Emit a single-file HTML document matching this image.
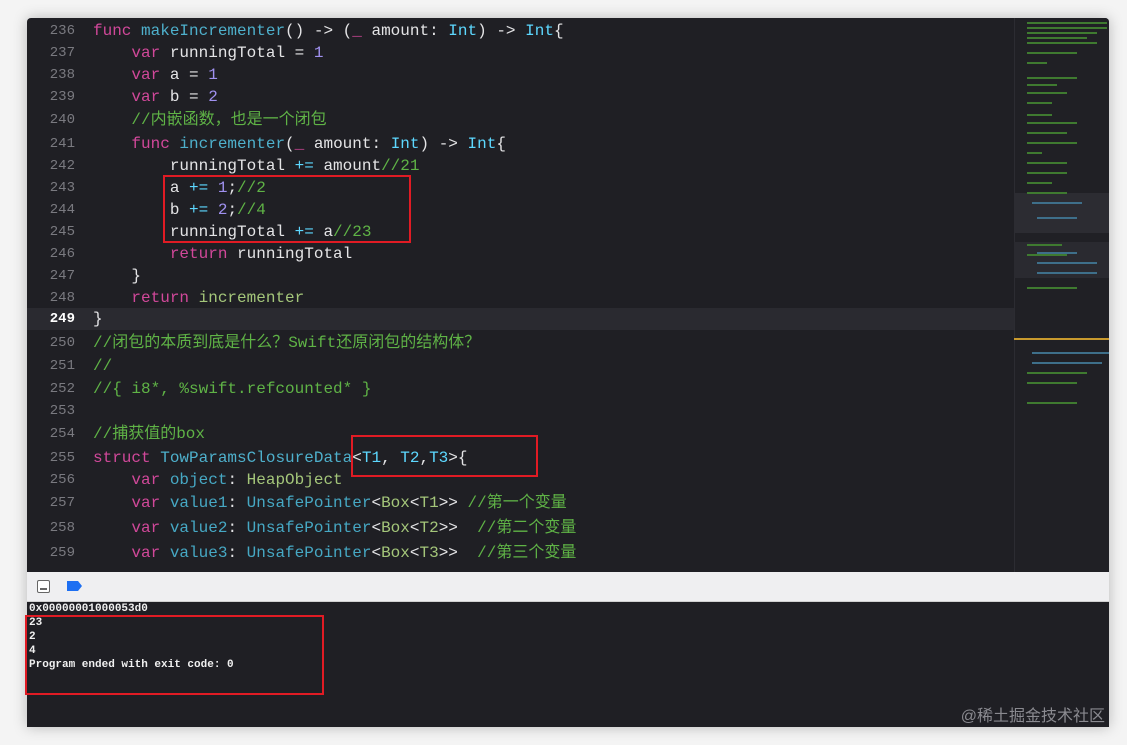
<!DOCTYPE html><html><head><meta charset="utf-8"><style>
body{margin:0;width:1127px;height:745px;background:#f4f4f4;position:relative;overflow:hidden;font-family:"Liberation Mono","Noto Sans CJK SC",monospace}
#win{position:absolute;left:27px;top:18px;width:1082px;height:709px;background:#1f1f24;box-shadow:0 0 14px rgba(0,0,0,.25);border-radius:4px 4px 0 0;overflow:hidden}
.l{position:absolute;left:0;height:22px;line-height:22px;font-size:16px;color:#e4e4e6;white-space:pre}
.n{position:absolute;left:0;width:48px;text-align:right;color:#7a7a80;font-size:14px}
.c0{position:absolute;left:66px}
.k{color:#d1489a}.f{color:#4eb0cc}.t{color:#5dd8ff}.m{color:#a091f0}.c{color:#5fb346}.g{color:#a4c67a}.o{color:#46a8c4}
.box{position:absolute;border:2px solid #e01b24}
</style></head><body>
<div id="win">
<div style="position:absolute;left:0;top:290px;width:987px;height:22px;background:#2a2a30"></div>
<div style="position:absolute;left:987px;top:0;width:95px;height:554px;background:#202025;border-left:1px solid #2c2c32"></div>
<div style="position:absolute;left:987px;top:175px;width:95px;height:40px;background:#2c2c32"></div>
<div style="position:absolute;left:987px;top:224px;width:95px;height:36px;background:#2a2a30"></div>
<div style="position:absolute;left:987px;top:320px;width:95px;height:2px;background:#c99a2e"></div>
<svg style="position:absolute;left:1000px;top:4px" width="82" height="550"><g fill="#3f7a30">
<rect x="0" y="0" width="80" height="2"/><rect x="0" y="5" width="80" height="2"/><rect x="0" y="10" width="70" height="2"/><rect x="0" y="15" width="60" height="2"/><rect x="0" y="20" width="70" height="2"/><rect x="0" y="30" width="50" height="2"/><rect x="0" y="40" width="20" height="2"/><rect x="0" y="55" width="50" height="2"/><rect x="0" y="62" width="30" height="2"/><rect x="0" y="70" width="40" height="2"/><rect x="0" y="80" width="25" height="2"/><rect x="0" y="92" width="25" height="2"/><rect x="0" y="100" width="50" height="2"/><rect x="0" y="110" width="40" height="2"/><rect x="0" y="120" width="50" height="2"/><rect x="0" y="130" width="15" height="2"/><rect x="0" y="140" width="40" height="2"/><rect x="0" y="150" width="40" height="2"/><rect x="0" y="160" width="25" height="2"/><rect x="0" y="170" width="40" height="2"/><rect x="0" y="222" width="35" height="2"/><rect x="0" y="232" width="40" height="2"/><rect x="0" y="265" width="50" height="2"/><rect x="0" y="350" width="60" height="2"/><rect x="0" y="360" width="50" height="2"/><rect x="0" y="380" width="50" height="2"/></g>
<g fill="#3e6f8a"><rect x="5" y="180" width="50" height="2"/><rect x="10" y="195" width="40" height="2"/><rect x="10" y="230" width="40" height="2"/><rect x="10" y="240" width="60" height="2"/><rect x="10" y="250" width="60" height="2"/><rect x="5" y="330" width="80" height="2"/><rect x="5" y="340" width="70" height="2"/></g></svg>

<div class="l" style="top:2px"><span class="n">236</span><span class="c0"><span class="k">func</span> <span class="f">makeIncrementer</span>() -&gt; (<span class="k">_</span> amount: <span class="t">Int</span>) -&gt; <span class="t">Int</span>{</span></div>
<div class="l" style="top:24px"><span class="n">237</span><span class="c0">    <span class="k">var</span> runningTotal = <span class="m">1</span></span></div>
<div class="l" style="top:46px"><span class="n">238</span><span class="c0">    <span class="k">var</span> a = <span class="m">1</span></span></div>
<div class="l" style="top:68px"><span class="n">239</span><span class="c0">    <span class="k">var</span> b = <span class="m">2</span></span></div>
<div class="l" style="top:91px"><span class="n">240</span><span class="c0">    <span class="c">//内嵌函数，也是一个闭包</span></span></div>
<div class="l" style="top:115px"><span class="n">241</span><span class="c0">    <span class="k">func</span> <span class="f">incrementer</span>(<span class="k">_</span> amount: <span class="t">Int</span>) -&gt; <span class="t">Int</span>{</span></div>
<div class="l" style="top:137px"><span class="n">242</span><span class="c0">        runningTotal <span class="t">+=</span> amount<span class="c">//21</span></span></div>
<div class="l" style="top:159px"><span class="n">243</span><span class="c0">        a <span class="t">+=</span> <span class="m">1</span>;<span class="c">//2</span></span></div>
<div class="l" style="top:181px"><span class="n">244</span><span class="c0">        b <span class="t">+=</span> <span class="m">2</span>;<span class="c">//4</span></span></div>
<div class="l" style="top:203px"><span class="n">245</span><span class="c0">        runningTotal <span class="t">+=</span> a<span class="c">//23</span></span></div>
<div class="l" style="top:225px"><span class="n">246</span><span class="c0">        <span class="k">return</span> runningTotal</span></div>
<div class="l" style="top:247px"><span class="n">247</span><span class="c0">    }</span></div>
<div class="l" style="top:269px"><span class="n">248</span><span class="c0">    <span class="k">return</span> <span class="g">incrementer</span></span></div>
<div class="l" style="top:290px"><span class="n" style="color:#fff;font-weight:bold">249</span><span class="c0">}</span></div>
<div class="l" style="top:314px"><span class="n">250</span><span class="c0"><span class="c">//闭包的本质到底是什么？Swift还原闭包的结构体？</span></span></div>
<div class="l" style="top:337px"><span class="n">251</span><span class="c0"><span class="c">//</span></span></div>
<div class="l" style="top:360px"><span class="n">252</span><span class="c0"><span class="c">//{ i8*, %swift.refcounted* }</span></span></div>
<div class="l" style="top:382px"><span class="n">253</span></div>
<div class="l" style="top:405px"><span class="n">254</span><span class="c0"><span class="c">//捕获值的box</span></span></div>
<div class="l" style="top:429px"><span class="n">255</span><span class="c0"><span class="k">struct</span> <span class="f">TowParamsClosureData</span>&lt;<span class="t">T1</span>, <span class="t">T2</span>,<span class="t">T3</span>&gt;{</span></div>
<div class="l" style="top:451px"><span class="n">256</span><span class="c0">    <span class="k">var</span> <span class="o">object</span>: <span class="g">HeapObject</span></span></div>
<div class="l" style="top:474px"><span class="n">257</span><span class="c0">    <span class="k">var</span> <span class="o">value1</span>: <span class="o">UnsafePointer</span>&lt;<span class="g">Box</span>&lt;<span class="g">T1</span>&gt;&gt; <span class="c">//第一个变量</span></span></div>
<div class="l" style="top:499px"><span class="n">258</span><span class="c0">    <span class="k">var</span> <span class="o">value2</span>: <span class="o">UnsafePointer</span>&lt;<span class="g">Box</span>&lt;<span class="g">T2</span>&gt;&gt;  <span class="c">//第二个变量</span></span></div>
<div class="l" style="top:524px"><span class="n">259</span><span class="c0">    <span class="k">var</span> <span class="o">value3</span>: <span class="o">UnsafePointer</span>&lt;<span class="g">Box</span>&lt;<span class="g">T3</span>&gt;&gt;  <span class="c">//第三个变量</span></span></div>

<div style="position:absolute;left:0;top:554px;width:1082px;height:29px;background:#efeff1;border-bottom:1px solid #d0d0d0"></div>
<div style="position:absolute;left:10px;top:562px;width:11px;height:11px;border:1px solid #666;border-radius:2px;background:#fff"><div style="position:absolute;left:2px;bottom:2px;width:7px;height:2px;background:#666"></div></div>
<svg style="position:absolute;left:40px;top:563px" width="16" height="10"><path d="M0 0H11L15 5L11 10H0Z" fill="#1d6ff2"/></svg>
<div style="position:absolute;left:2px;top:584px;font-size:11px;line-height:14px;color:#f0f0f0;font-weight:bold;white-space:pre">0x00000001000053d0
23
2
4
Program ended with exit code: 0</div>
</div>
<div class="box" style="left:163px;top:175px;width:244px;height:64px"></div>
<div class="box" style="left:351px;top:435px;width:183px;height:38px"></div>
<div class="box" style="left:25px;top:615px;width:295px;height:76px"></div>
<div style="position:absolute;right:22px;top:702px;font-family:'Liberation Sans','Noto Sans CJK SC',sans-serif;font-size:16px;color:#8a8a90">@稀土掘金技术社区</div>
</body></html>
